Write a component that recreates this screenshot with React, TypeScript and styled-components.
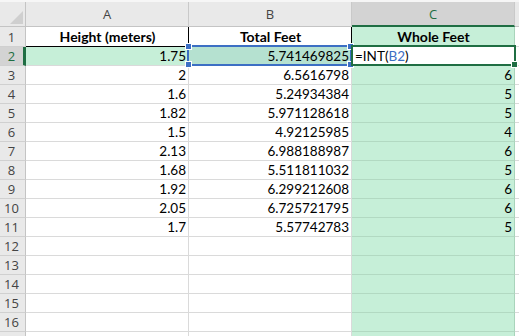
import React from 'react';
import styled, { createGlobalStyle, css } from 'styled-components';

const GlobalStyle = createGlobalStyle`
  html, body {
    margin: 0;
    padding: 0;
    background: #fff;
    overflow: hidden;
  }
`;

const GREEN = '#1f6e43';
const FILL = '#c6efd8';
const GRID = '#dadada';

type Row = [string, string, string];

const rows: Row[] = [
  ['1.75', '5.741469825', ''],
  ['2', '6.5616798', '6'],
  ['1.6', '5.24934384', '5'],
  ['1.82', '5.971128618', '5'],
  ['1.5', '4.92125985', '4'],
  ['2.13', '6.988188987', '6'],
  ['1.68', '5.511811032', '5'],
  ['1.92', '6.299212608', '6'],
  ['2.05', '6.725721795', '6'],
  ['1.7', '5.57742783', '5'],
  ['', '', ''],
  ['', '', ''],
  ['', '', ''],
  ['', '', ''],
  ['', '', ''],
  ['', '', ''],
];

const Sheet = styled.div`
  display: grid;
  grid-template-columns: 26px 163px 163px 163px 1fr;
  grid-auto-rows: 19px;
  grid-template-rows: 25px 20px;
  padding-top: 2px;
  background: #f6f6f6;
  width: 519px;
  height: 336px;
  overflow: hidden;
  box-sizing: border-box;
  font-family: Lato, "Liberation Sans", sans-serif;
  font-size: 13.5px;
  color: #000;
`;

const Corner = styled.div`
  background: #e9e9e9;
  border-right: 1px solid #c4c4c4;
  border-bottom: 1px solid #c4c4c4;
  box-sizing: border-box;
  display: flex;
  align-items: flex-end;
  justify-content: flex-end;
  padding: 0 2px 2px 0;
`;

const ColHeader = styled.div<{ $selected?: boolean }>`
  background: ${(p) => (p.$selected ? '#d3d3d3' : '#e9e9e9')};
  color: ${(p) => (p.$selected ? GREEN : '#444')};
  border-right: 1px solid #c9c9c9;
  border-bottom: ${(p) => (p.$selected ? `2px solid ${GREEN}` : '1px solid #c4c4c4')};
  box-sizing: border-box;
  display: flex;
  align-items: center;
  justify-content: center;
  font-family: "Open Sans", "Liberation Sans", sans-serif;
  font-size: 13px;
`;

const RowHeader = styled.div<{ $selected?: boolean }>`
  background: ${(p) => (p.$selected ? '#d3d3d3' : '#e9e9e9')};
  color: ${(p) => (p.$selected ? GREEN : '#444')};
  border-right: ${(p) => (p.$selected ? `3px solid ${GREEN}` : '1px solid #c4c4c4')};
  border-bottom: 1px solid #d0d0d0;
  box-sizing: border-box;
  display: flex;
  align-items: center;
  justify-content: center;
  padding-right: ${(p) => (p.$selected ? '0' : '2px')};
  font-family: "Open Sans", "Liberation Sans", sans-serif;
  font-size: 13px;
`;

const Cell = styled.div<{
  $fill?: string;
  $align?: 'left' | 'right' | 'center';
  $title?: boolean;
  $green?: boolean;
}>`
  position: relative;
  box-sizing: border-box;
  background: ${(p) => p.$fill || '#fff'};
  border-right: 1px solid ${(p) => (p.$green ? '#a9d4bb' : GRID)};
  border-bottom: 1px solid ${(p) => (p.$green ? '#b2d9c2' : GRID)};
  display: flex;
  align-items: flex-end;
  padding: 0 2px 1px 3px;
  white-space: nowrap;
  justify-content: ${(p) =>
    p.$align === 'left' ? 'flex-start' : p.$align === 'center' ? 'center' : 'flex-end'};
  ${(p) =>
    p.$title &&
    css`
      font-weight: 700;
      font-size: 14px;
      border-bottom-color: #000;
      border-right-color: ${p.$green ? '#a9d4bb' : '#000'};
    `}
`;

const Handle = styled.span<{ $x: 'left' | 'right'; $y: 'top' | 'bottom'; $color: string }>`
  position: absolute;
  width: 5px;
  height: 5px;
  background: ${(p) => p.$color};
  border: 1px solid #fff;
  ${(p) => (p.$x === 'left' ? 'left: -4px;' : 'right: -4px;')}
  ${(p) => (p.$y === 'top' ? 'top: -4px;' : 'bottom: -4px;')}
  z-index: 3;
`;

const RefBox = styled.div`
  position: absolute;
  left: -2px;
  top: -2px;
  right: -1px;
  bottom: -1px;
  border: 2px solid #3c6fc4;
  pointer-events: none;
  z-index: 2;
`;

const ActiveBox = styled.div`
  position: absolute;
  left: -1px;
  top: -2px;
  right: -2px;
  bottom: -1px;
  border: 2px solid ${GREEN};
  pointer-events: none;
  z-index: 2;
`;

const Formula = styled.span`
  color: #000;
  .ref {
    color: #3c6fc4;
  }
`;

function CornerMark() {
  return (
    <svg width="13" height="13" viewBox="0 0 13 13">
      <polygon points="13,0 13,13 0,13" fill="#cfcfcf" />
    </svg>
  );
}

export default function App() {
  return (
    <>
      <GlobalStyle />
      <Sheet>
        <Corner>
          <CornerMark />
        </Corner>
        <ColHeader>A</ColHeader>
        <ColHeader>B</ColHeader>
        <ColHeader $selected>C</ColHeader>
        <ColHeader />

        <RowHeader>1</RowHeader>
        <Cell $align="center" $title>Height (meters)</Cell>
        <Cell $align="center" $title>Total Feet</Cell>
        <Cell $align="center" $title $fill={FILL} $green>Whole Feet</Cell>
        <Cell />

        {rows.map((r, i) => {
          const n = i + 2;
          const active = n === 2;
          return (
            <React.Fragment key={n}>
              <RowHeader $selected={active}>{n}</RowHeader>
              <Cell $fill={active ? FILL : undefined}>{r[0]}</Cell>
              <Cell $fill={active ? '#b5e1d0' : undefined}>
                {r[1]}
                {active && (
                  <RefBox>
                    <Handle $x="left" $y="top" $color="#3c6fc4" />
                    <Handle $x="right" $y="top" $color="#3c6fc4" />
                    <Handle $x="left" $y="bottom" $color="#3c6fc4" />
                    <Handle $x="right" $y="bottom" $color="#3c6fc4" />
                  </RefBox>
                )}
              </Cell>
              {active ? (
                <Cell $align="left" $fill="#fff" $green>
                  <Formula>
                    =INT(<span className="ref">B2</span>)
                  </Formula>
                  <ActiveBox>
                    <Handle $x="right" $y="bottom" $color={GREEN} />
                  </ActiveBox>
                </Cell>
              ) : (
                <Cell $fill={FILL} $green>{r[2]}</Cell>
              )}
              <Cell />
            </React.Fragment>
          );
        })}

        {/* row 17, only its top edge shows */}
        <RowHeader />
        <Cell />
        <Cell />
        <Cell $fill={FILL} $green />
        <Cell />
      </Sheet>
    </>
  );
}
